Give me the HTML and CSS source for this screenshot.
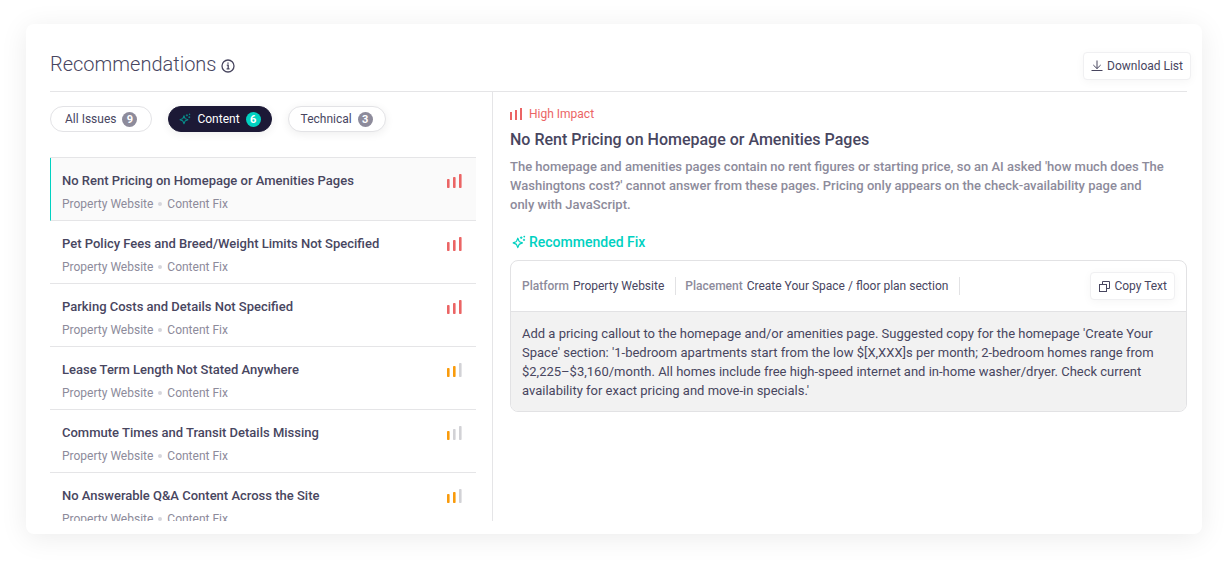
FILE: index.html
```html
<!DOCTYPE html>
<html lang="en">
<head>
    <meta charset="UTF-8">
    <meta name="viewport" content="width=device-width, initial-scale=1.0">
    <title>Recommendations</title>
    <link rel="stylesheet" href="styles.css">
</head>
<body>

    <!-- Shared icons -->
    <svg class="icon-defs" aria-hidden="true">
        <symbol id="icon-sparkle" viewBox="0 0 14 14">
            <path stroke-width="1.2" stroke-linejoin="round" d="M5.8 3.2 L7 6.1 Q7.2 6.5 7.6 6.7 L10.4 7.9 L7.6 9.1 Q7.2 9.3 7 9.7 L5.8 12.6 L4.6 9.7 Q4.4 9.3 4 9.1 L1.2 7.9 L4 6.7 Q4.4 6.5 4.6 6.1 Z" />
            <path d="M9.2 1.4 V4 M7.9 2.7 H10.5 M12 3.8 V6 M10.9 4.9 H13.1 M12.3 0.8 V2.4 M11.5 1.6 H13.1" />
        </symbol>
        <symbol id="icon-bars" viewBox="0 0 15 14">
            <rect class="bar-1" x="0" y="5" width="2.6" height="9" rx="0.8" />
            <rect class="bar-2" x="6" y="3" width="2.6" height="11" rx="0.8" />
            <rect class="bar-3" x="12" y="0" width="2.6" height="14" rx="0.8" />
        </symbol>
    </svg>

    <main class="card">
        <header class="card-header">
            <h1>Recommendations</h1>
            <svg class="info-icon" viewBox="0 0 14 14" aria-hidden="true">
                <circle cx="7" cy="7" r="6" />
                <path d="M5.8 6.2 H7.2 V9.8 M5.6 9.9 H8.6 M7 3.6 V4.7" />
            </svg>
            <button class="btn download-btn" type="button">
                <svg class="download-icon" viewBox="0 0 12 12" aria-hidden="true">
                    <path d="M6 0.5 V8.5 M2.3 5 L6 8.6 L9.7 5 M0.5 10.5 H11.5" />
                </svg>
                Download List
            </button>
        </header>

        <div class="card-body">
            <section class="issues">
                <div class="tabs">
                    <button class="tab" type="button">All Issues <span class="count">9</span></button>
                    <button class="tab active" type="button">
                        <svg class="sparkle" aria-hidden="true"><use href="#icon-sparkle" /></svg>
                        Content <span class="count">6</span>
                    </button>
                    <button class="tab raised" type="button">Technical <span class="count">3</span></button>
                </div>

                <ul class="issue-list">
                    <li class="issue selected">
                        <div>
                            <h3>No Rent Pricing on Homepage or Amenities Pages</h3>
                            <p>Property Website <i class="dot"></i> Content Fix</p>
                        </div>
                        <svg class="bars high"><use href="#icon-bars" /></svg>
                    </li>
                    <li class="issue">
                        <div>
                            <h3>Pet Policy Fees and Breed/Weight Limits Not Specified</h3>
                            <p>Property Website <i class="dot"></i> Content Fix</p>
                        </div>
                        <svg class="bars high"><use href="#icon-bars" /></svg>
                    </li>
                    <li class="issue">
                        <div>
                            <h3>Parking Costs and Details Not Specified</h3>
                            <p>Property Website <i class="dot"></i> Content Fix</p>
                        </div>
                        <svg class="bars high"><use href="#icon-bars" /></svg>
                    </li>
                    <li class="issue">
                        <div>
                            <h3>Lease Term Length Not Stated Anywhere</h3>
                            <p>Property Website <i class="dot"></i> Content Fix</p>
                        </div>
                        <svg class="bars medium"><use href="#icon-bars" /></svg>
                    </li>
                    <li class="issue">
                        <div>
                            <h3>Commute Times and Transit Details Missing</h3>
                            <p>Property Website <i class="dot"></i> Content Fix</p>
                        </div>
                        <svg class="bars low"><use href="#icon-bars" /></svg>
                    </li>
                    <li class="issue">
                        <div>
                            <h3>No Answerable Q&amp;A Content Across the Site</h3>
                            <p>Property Website <i class="dot"></i> Content Fix</p>
                        </div>
                        <svg class="bars medium"><use href="#icon-bars" /></svg>
                    </li>
                </ul>
            </section>

            <section class="detail">
                <p class="impact">
                    <svg class="impact-icon" viewBox="0 0 13 12" aria-hidden="true">
                        <path d="M1 4 V12 M6 2 V12 M11 0 V12" />
                    </svg>
                    High Impact
                </p>
                <h2>No Rent Pricing on Homepage or Amenities Pages</h2>
                <p class="summary">The homepage and amenities pages contain no rent figures or starting price, so an AI asked 'how much does The Washingtons cost?' cannot answer from these pages. Pricing only appears on the check-availability page and only with JavaScript.</p>

                <h3 class="fix-title">
                    <svg class="sparkle" aria-hidden="true"><use href="#icon-sparkle" /></svg>
                    Recommended Fix
                </h3>
                <div class="fix-box">
                    <div class="fix-header">
                        <p class="meta"><span>Platform</span> Property Website</p>
                        <p class="meta"><span>Placement</span> Create Your Space / floor plan section</p>
                        <button class="btn copy-btn" type="button">
                            <svg class="copy-icon" viewBox="0 0 11 11" aria-hidden="true">
                                <path d="M3.5 3 V0.5 H10.5 V7.5 H8" />
                                <rect x="0.5" y="3.5" width="7" height="7" />
                            </svg>
                            Copy Text
                        </button>
                    </div>
                    <p class="fix-text">Add a pricing callout to the homepage and/or amenities page. Suggested copy for the homepage 'Create Your Space' section: '1-bedroom apartments start from the low $[X,XXX]s per month; 2-bedroom homes range from $2,225–$3,160/month. All homes include free high-speed internet and in-home washer/dryer. Check current availability for exact pricing and move-in specials.'</p>
                </div>
            </section>
        </div>
    </main>

</body>
</html>
```

FILE: styles.css
```css
* {
    box-sizing: border-box;
}
body {
    margin: 0;
    padding: 24px 26px 28px;
    height: 100vh;
    font-family: Roboto, sans-serif;
    font-size: 12px;
    color: #48465f;
    background: #fff;
}
h1, h2, h3, p, ul {
    margin: 0;
    padding: 0;
}
button {
    font: inherit;
    color: inherit;
    cursor: pointer;
}
svg {
    flex: none;
    fill: none;
    stroke: currentColor;
}
.icon-defs {
    display: none;
}
.card {
    display: flex;
    flex-direction: column;
    height: 100%;
    padding: 24px 15px 13px 24px;
    background: #fff;
    border-radius: 8px;
    box-shadow: 0 4px 28px rgba(0, 0, 0, 0.08);
}

/* Header */
.card-header {
    display: flex;
    align-items: center;
    height: 44px;
    padding-bottom: 12px;
    border-bottom: 1px solid #e5e5e7;
    flex: none;
}
h1 {
    font-size: 20px;
    font-weight: 300;
    line-height: 32px;
}
.info-icon {
    width: 14px;
    height: 14px;
    margin: 4px 0 0 5px;
    stroke-width: 1.3;
}
.btn {
    display: flex;
    align-items: center;
    gap: 4px;
    height: 28px;
    padding: 0 7px;
    background: #fff;
    border: 1px solid #f0f0f2;
    border-radius: 4px;
    box-shadow: 0 2px 10px rgba(0, 0, 0, 0.04);
    margin-left: auto;
}
.download-btn {
    margin-top: 4px;
    margin-right: -4px;
}
.download-icon {
    width: 12px;
    height: 12px;
}
.copy-btn {
    padding-left: 8px;
}
.copy-icon {
    width: 11px;
    height: 11px;
}
.card-body {
    display: flex;
    flex: 1;
    min-height: 0;
}

/* Issue list */
.issues {
    display: flex;
    flex-direction: column;
    flex: 0 0 443px;
    padding-right: 16px;
    border-right: 1px solid #e5e5e7;
}
.tabs {
    display: flex;
    gap: 16px;
    padding: 14px 0 25px;
}
.tab {
    display: flex;
    align-items: center;
    gap: 6px;
    height: 26px;
    padding: 0 14px;
    background: #fff;
    border: 1px solid #e3e3e6;
    border-radius: 13px;
}
.tab.raised {
    padding: 0 12px;
    box-shadow: 0 2px 10px rgba(0, 0, 0, 0.07);
}
.tab.active {
    padding: 0 10px;
    color: #fff;
    background: #1c1936;
    border-color: #1c1936;
    box-shadow: 0 2px 10px rgba(0, 0, 0, 0.07);
}
.count {
    width: 15px;
    height: 15px;
    font-size: 11px;
    font-weight: 700;
    line-height: 15px;
    text-align: center;
    color: #fff;
    background: #8d8b9b;
    border-radius: 50%;
}
.active .count {
    background: #00d1c1;
}
.sparkle {
    width: 14px;
    height: 14px;
    color: #00d1c1;
}
.active .sparkle {
    width: 12px;
    color: #078e8b;
}
.issue-list {
    flex: 1;
    min-height: 0;
    overflow: hidden;
    list-style: none;
    border-top: 1px solid #e5e5e7;
}
.issue {
    display: flex;
    justify-content: space-between;
    height: 63px;
    padding: 14px 14px 0 12px;
    border-bottom: 1px solid #e5e5e7;
}
.issue.selected {
    padding-left: 11px;
    background: #fafafa;
    border-left: 1px solid #00d1c1;
}
.issue h3 {
    font-size: 13px;
    font-weight: 500;
    line-height: 18px;
}
.issue p {
    margin-top: 6px;
    line-height: 16px;
    color: #8d8b9b;
}
.dot {
    display: inline-block;
    width: 4px;
    height: 4px;
    margin: 0 2px;
    vertical-align: 2px;
    background: #d6d6dc;
    border-radius: 50%;
}
.bars {
    width: 15px;
    height: 14px;
    margin-top: 2px;
    stroke: none;
    --b1: #d2d2d6;
    --b2: #d2d2d6;
    --b3: #d2d2d6;
}
.bar-1 { fill: var(--b1); }
.bar-2 { fill: var(--b2); }
.bar-3 { fill: var(--b3); }
.bars.high {
    --b1: #eb6565;
    --b2: #eb6565;
    --b3: #eb6565;
}
.bars.medium {
    --b1: #f99b0c;
    --b2: #f99b0c;
}
.bars.low {
    --b1: #f99b0c;
}

/* Issue detail */
.detail {
    flex: 1;
    min-width: 0;
    padding: 14px 0 0 17px;
}
.impact {
    display: flex;
    align-items: center;
    gap: 6px;
    line-height: 16px;
    color: #eb6565;
}
.impact-icon {
    width: 13px;
    height: 12px;
    stroke-width: 2;
}
h2 {
    margin-top: 8px;
    font-size: 16px;
    font-weight: 500;
    line-height: 20px;
}
.summary {
    margin-top: 7px;
    padding-right: 20px;
    font-size: 13px;
    font-weight: 500;
    line-height: 19px;
    color: #8d8b9b;
}
.fix-title {
    display: flex;
    align-items: center;
    gap: 3px;
    margin: 18px 0 8px 2px;
    font-size: 14px;
    font-weight: 500;
    line-height: 20px;
    color: #00d1c1;
}
.fix-box {
    border: 1px solid #e2e2e4;
    border-radius: 8px;
    overflow: hidden;
}
.fix-header {
    display: flex;
    align-items: center;
    height: 51px;
    padding: 0 11px;
    border-bottom: 1px solid #e2e2e4;
}
.meta {
    padding-right: 11px;
    margin-right: 9px;
    line-height: 18px;
    border-right: 1px solid #e2e2e4;
}
.meta span {
    margin-right: 1px;
    font-weight: 500;
    color: #8d8b9b;
}
.fix-text {
    padding: 12px 11px 11px;
    font-size: 13px;
    line-height: 19px;
    background: #f2f2f2;
}
```
